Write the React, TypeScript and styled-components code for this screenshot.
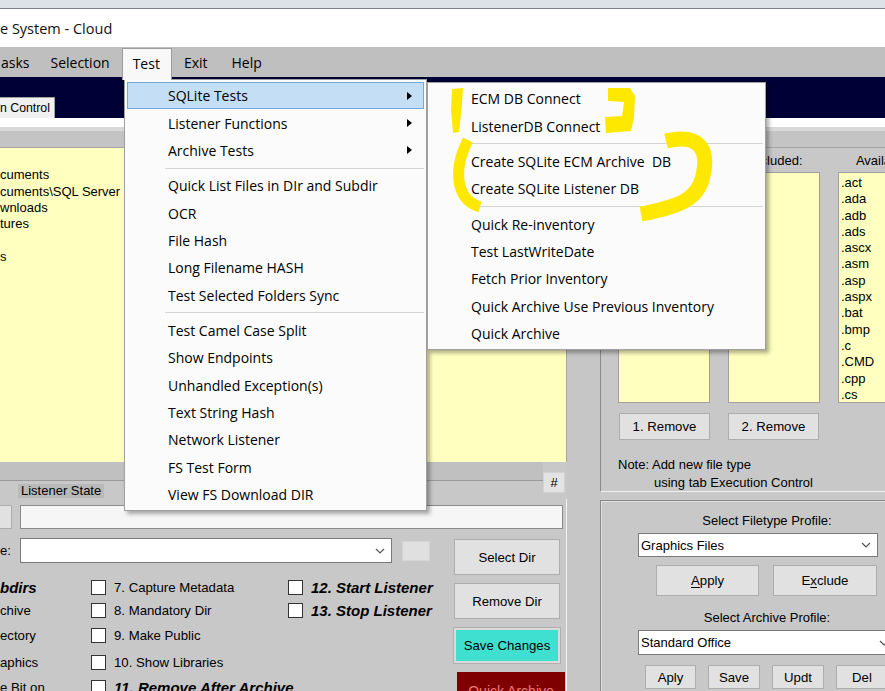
import React from "react";
import styled, { createGlobalStyle, css } from "styled-components";

const UI = `"Open Sans", "Noto Sans", sans-serif`;
const FORM = `"Liberation Sans", Arial, sans-serif`;

const Global = createGlobalStyle`
  html, body { margin: 0; padding: 0; }
  body {
    width: 885px; height: 691px; overflow: hidden;
    background: #c8c8c8;
    font-family: ${FORM};
    color: #000;
  }
  #root { width: 885px; height: 691px; }
  * { box-sizing: border-box; }
`;

const Window = styled.div`
  position: relative;
  width: 885px;
  height: 691px;
  overflow: hidden;
  display: flex;
  flex-direction: column;
  & > * { flex-shrink: 0; }
`;

const TopStrip = styled.div`
  height: 9px;
  background: #dde1e8;
  border-bottom: 1px solid #7c8088;
`;

const TitleBar = styled.div`
  height: 38px;
  background: #fff;
  display: flex;
  align-items: center;
  font-family: ${UI};
  font-size: 14.5px;
  color: #111;
`;

const MenuBar = styled.div`
  height: 30px;
  background: #bfbfbf;
  display: flex;
  align-items: stretch;
  position: relative;
  z-index: 5;
`;

const MenuItem = styled.div<{ $active?: boolean; $first?: boolean }>`
  display: flex;
  align-items: center;
  padding: 0 11px;
  font-family: ${UI};
  font-size: 14px;
  color: #000;
  border: 1px solid transparent;
  border-bottom: none;
  ${(p) => p.$first && css`padding: 0 8px 0 0;`}
  ${(p) =>
    p.$active &&
    css`
      background: #f8f8f8;
      border-color: #9c9c9c;
      margin-top: 1px;
      margin-bottom: -3px;
      padding-bottom: 3px;
      padding-left: 10px;
      padding-right: 11px;
    `}
`;

const NavBand = styled.div`
  height: 41px;
  background: #000036;
  display: flex;
  align-items: flex-end;
`;

const Tab = styled.div`
  height: 21px;
  background: #f0f0f0;
  border-right: 1px solid #a0a0a0;
  border-top: 1px solid #a0a0a0;
  padding: 0 4px 0 0;
  display: flex;
  align-items: center;
  font-family: ${FORM};
  font-size: 12.3px;
`;

const TabPage = styled.div`
  flex: 1;
  background: #fff;
  padding-top: 9px;
  display: flex;
  flex-direction: column;
  min-height: 0;
`;

const Content = styled.div`
  flex: 1;
  background: #c8c8c8;
  display: flex;
  flex-direction: column;
  & > * { flex-shrink: 0; }
`;

const HeaderStrip = styled.div`
  height: 21px;
  background: linear-gradient(#d9d9d9 0 4px, #c4c4c4 4px);
  border-bottom: 1px solid #a6a6a6;
`;

const Main = styled.div`
  flex: 1;
  display: flex;
`;

const LeftCol = styled.div`
  width: 567px;
  display: flex;
  flex-direction: column;
  & > * { flex-shrink: 0; }
`;

const YellowList = styled.div`
  height: 314px;
  background: #ffffc0;
  border-right: 1px solid #a8a8a8;
  padding-top: 3px;
  font-size: 13px;
  line-height: 16.3px;
  white-space: nowrap;
  overflow: hidden;
`;

const ListLine = styled.div`
  height: 16.3px;
`;

const SplitRow = styled.div`
  height: 37px;
  display: flex;
  align-items: flex-start;
`;

const SplitLeft = styled.div`
  flex: 1;
  display: flex;
  flex-direction: column;
`;

const Band = styled.div`
  height: 19px;
  background: #c0c0c0;
  border-bottom: 1px solid #9a9a9a;
`;

const StateLabel = styled.div`
  align-self: flex-start;
  margin: 3px 0 0 18px;
  padding: 0 3px;
  background: #b9b9b9;
  font-size: 13px;
  line-height: 14px;
`;

const HashButton = styled.div`
  width: 22px;
  height: 21px;
  margin: 10px 2px 0 0;
  background: #e3e3e3;
  border: 1px solid #d2d2d2;
  display: flex;
  align-items: center;
  justify-content: center;
  font-size: 13px;
`;

const BottomArea = styled.div`
  flex: 1;
  border-right: 1px solid #f2f2f2;
  padding-top: 6px;
`;

const TextRow = styled.div`
  display: flex;
  gap: 8px;
  height: 24px;
  padding-right: 3px;
`;

const SmallBtn = styled.div`
  width: 12px;
  background: #e1e1e1;
  border: 1px solid #adadad;
  border-left: none;
`;

const TextBox = styled.div`
  flex: 1;
  background: #f6f6f6;
  border: 1px solid #8a8a8a;
`;

const FormGrid = styled.div`
  display: grid;
  grid-template-columns: 440px 106px;
  column-gap: 14px;
  margin-top: 9px;
`;

const LeftForm = styled.div`
  display: flex;
  flex-direction: column;
`;

const ComboRow = styled.div`
  display: flex;
  align-items: center;
  height: 25px;
`;

const ShortLabel = styled.div`
  width: 20px;
  font-size: 13px;
`;

const Combo = styled.div<{ $w: number; $h?: number }>`
  width: ${(p) => p.$w}px;
  height: ${(p) => p.$h ?? 25}px;
  background: #fff;
  border: 1px solid #7a7a7a;
  display: flex;
  align-items: center;
  padding-left: 2px;
  font-size: 13px;
  position: relative;
`;

const ComboText = styled.span`
  flex: 1;
`;

const Chevron = styled.svg`
  width: 10px;
  height: 6px;
  margin-right: 6px;
`;

const ColorBox = styled.div`
  width: 28px;
  height: 20px;
  margin-left: 10px;
  background: #e0e0e0;
  border: 1px solid #d4d4d4;
`;

const CheckGrid = styled.div`
  margin-top: 12px;
  display: grid;
  grid-template-columns: 91px 197px auto;
  grid-template-rows: 24px 23px 26px 28px 22px;
  white-space: nowrap;
`;

const CheckItem = styled.div<{ $col: number; $row: number }>`
  grid-column: ${(p) => p.$col};
  grid-row: ${(p) => p.$row};
  display: flex;
  align-items: center;
  gap: 8px;
`;

const Box = styled.div`
  width: 15px;
  height: 15px;
  background: #fff;
  border: 1px solid #333;
  flex: none;
`;

const CheckText = styled.span<{ $strong?: boolean }>`
  font-size: 13.2px;
  ${(p) =>
    p.$strong &&
    css`
      font-weight: bold;
      font-style: italic;
      font-size: 15px;
    `}
`;

const ButtonCol = styled.div`
  display: flex;
  flex-direction: column;
  padding-top: 1px;
`;

const Btn = styled.div<{ $w?: number; $h: number; $mt?: number; $ml?: number }>`
  width: ${(p) => (p.$w ? `${p.$w}px` : "auto")};
  height: ${(p) => p.$h}px;
  margin-top: ${(p) => p.$mt ?? 0}px;
  margin-left: ${(p) => p.$ml ?? 0}px;
  background: #e1e1e1;
  border: 1px solid #adadad;
  display: flex;
  align-items: center;
  justify-content: center;
  font-size: 13.2px;
  flex: none;
`;

const SaveBtn = styled(Btn)`
  background: #40e0d0;
  border: 2px solid #dadada;
  box-shadow: 0 0 0 1px #b0b0b0;
`;

const DangerBtn = styled.div`
  height: 40px;
  margin: 9px 0 0 3px;
  width: 108px;
  background: #7f0000;
  color: #ee7a7a;
  display: flex;
  justify-content: center;
  padding-top: 11px;
  font-size: 14px;
  flex: none;
`;

const Gutter = styled.div`
  width: 33px;
  background: #c6c6c6;
`;

const RightCol = styled.div`
  width: 285px;
  overflow: hidden;
  display: flex;
  flex-direction: column;
`;

const RightInner = styled.div`
  width: 333px;
  display: flex;
  flex-direction: column;
  flex: 1;
  & > * { flex-shrink: 0; }
`;

const TopBox = styled.div`
  height: 344px;
  border-left: 1px solid #8a8a8a;
  border-bottom: 1px solid #f0f0f0;
  padding-left: 17px;
  display: flex;
  flex-direction: column;
  & > * { flex-shrink: 0; }
`;

const Tri = styled.div`
  display: grid;
  grid-template-columns: 92px 92px 92px;
  column-gap: 18px;
`;

const ColLabel = styled.div`
  margin-top: 5px;
  text-align: center;
  font-size: 13px;
  line-height: 15px;
`;

const SmallList = styled.div`
  height: 231px;
  margin-top: 4px;
  background: #ffffc0;
  border: 1px solid #a0a0a0;
  padding: 2px 0 0 2px;
  font-size: 13px;
  line-height: 16.3px;
  overflow: hidden;
`;

const RemoveRow = styled.div`
  display: flex;
  gap: 18px;
  margin-top: 10px;
  padding-left: 1px;
`;

const Note = styled.div`
  margin-top: 16px;
  font-size: 13px;
  line-height: 18px;
`;

const NoteIndent = styled.div`
  padding-left: 36px;
`;

const BoxGap = styled.div`
  height: 8px;
`;

const LowerBox = styled.div`
  flex: 1;
  border-top: 1px solid #8a8a8a;
  border-left: 1px solid #8a8a8a;
  box-shadow: inset 1px 1px 0 #dedede;
  padding-top: 12px;
  display: flex;
  flex-direction: column;
  & > * { flex-shrink: 0; }
`;

const CenterLabel = styled.div<{ $mt?: number }>`
  text-align: center;
  font-size: 13px;
  line-height: 16px;
  margin-top: ${(p) => p.$mt ?? 0}px;
`;

const Row = styled.div<{ $ml: number; $gap: number; $mt: number }>`
  display: flex;
  gap: ${(p) => p.$gap}px;
  margin-left: ${(p) => p.$ml}px;
  margin-top: ${(p) => p.$mt}px;
`;

const U = styled.span`
  text-decoration: underline;
  text-underline-offset: 2px;
`;

/* ---------- menus ---------- */

const Dropdown = styled.div<{ $left: number; $top: number; $w: number }>`
  position: absolute;
  left: ${(p) => p.$left}px;
  top: ${(p) => p.$top}px;
  width: ${(p) => p.$w}px;
  background: #fbfbfb;
  border: 1px solid #a0a0a0;
  padding: 2px;
  box-shadow: 3px 3px 4px rgba(0, 0, 0, 0.32);
  z-index: 4;
`;

const MenuRow = styled.div<{ $hl?: boolean }>`
  position: relative;
  height: 27.35px;
  display: flex;
  align-items: center;
  padding-left: 40px;
  font-family: ${UI};
  font-size: 14px;
  color: #000;
  white-space: pre;
  border: 1px solid transparent;
  ${(p) =>
    p.$hl &&
    css`
      background: #c3def5;
      border-color: #72a9dd;
    `}
`;

const Arrow = styled.svg`
  position: absolute;
  right: 11px;
  top: 50%;
  margin-top: -4px;
  width: 5px;
  height: 8px;
`;

const Sep = styled.div`
  height: 8px;
  display: flex;
  align-items: center;
  padding-left: 38px;
  &::after {
    content: "";
    flex: 1;
    height: 1px;
    background: #d4d4d4;
  }
`;

const Overlay = styled.svg`
  position: absolute;
  left: 0;
  top: 0;
  width: 885px;
  height: 691px;
  pointer-events: none;
  z-index: 10;
`;

type Entry = string | { label: string; sub?: boolean; hl?: boolean };

const mainMenu: Entry[] = [
  { label: "SQLite Tests", sub: true, hl: true },
  { label: "Listener Functions", sub: true },
  { label: "Archive Tests", sub: true },
  "-",
  "Quick List Files in DIr and Subdir",
  "OCR",
  "File Hash",
  "Long Filename HASH",
  "Test Selected Folders Sync",
  "-",
  "Test Camel Case Split",
  "Show Endpoints",
  "Unhandled Exception(s)",
  "Text String Hash",
  "Network Listener",
  "FS Test Form",
  "View FS Download DIR",
];

const subMenu: Entry[] = [
  "ECM DB Connect",
  "ListenerDB Connect",
  "-",
  "Create SQLite ECM Archive  DB",
  "Create SQLite Listener DB",
  "-",
  "Quick Re-inventory",
  "Test LastWriteDate",
  "Fetch Prior Inventory",
  "Quick Archive Use Previous Inventory",
  "Quick Archive",
];

const renderEntries = (entries: Entry[]) =>
  entries.map((e, i) => {
    if (e === "-") return <Sep key={i} />;
    const item = typeof e === "string" ? { label: e } : e;
    return (
      <MenuRow key={i} $hl={item.hl}>
        {item.label}
        {item.sub && (
          <Arrow viewBox="0 0 5 8">
            <polygon points="0,0 5,4 0,8" fill="#000" />
          </Arrow>
        )}
      </MenuRow>
    );
  });

const ChevronIcon = () => (
  <Chevron viewBox="0 0 10 6">
    <polyline points="1,1 5,5 9,1" fill="none" stroke="#555" strokeWidth="1.2" />
  </Chevron>
);

const leftList = ["", "cuments", "cuments\\SQL Server Management Studio", "wnloads", "tures", "", "s"];
const extensions = [".act", ".ada", ".adb", ".ads", ".ascx", ".asm", ".asp", ".aspx", ".bat", ".bmp", ".c", ".CMD", ".cpp", ".cs"];

const checks: { col: number; row: number; text: string; strong?: boolean; box?: boolean }[] = [
  { col: 1, row: 1, text: "bdirs", strong: true },
  { col: 1, row: 2, text: "chive" },
  { col: 1, row: 3, text: "ectory" },
  { col: 1, row: 4, text: "aphics" },
  { col: 1, row: 5, text: "e Bit on" },
  { col: 2, row: 1, text: "7. Capture Metadata", box: true },
  { col: 2, row: 2, text: "8. Mandatory Dir", box: true },
  { col: 2, row: 3, text: "9. Make Public", box: true },
  { col: 2, row: 4, text: "10. Show Libraries", box: true },
  { col: 2, row: 5, text: "11. Remove After Archive", box: true, strong: true },
  { col: 3, row: 1, text: "12. Start Listener", box: true, strong: true },
  { col: 3, row: 2, text: "13. Stop Listener", box: true, strong: true },
];

export default function App() {
  return (
    <>
      <Global />
      <Window>
        <TopStrip />
        <TitleBar>e System - Cloud</TitleBar>
        <MenuBar>
          <MenuItem $first>asks</MenuItem>
          <MenuItem>Selection</MenuItem>
          <MenuItem $active>Test</MenuItem>
          <MenuItem>Exit</MenuItem>
          <MenuItem>Help</MenuItem>
        </MenuBar>
        <NavBand>
          <Tab>n Control</Tab>
        </NavBand>
        <TabPage>
          <Content>
            <HeaderStrip />
            <Main>
              <LeftCol>
                <YellowList>
                  {leftList.map((t, i) => (
                    <ListLine key={i}>{t}</ListLine>
                  ))}
                </YellowList>
                <SplitRow>
                  <SplitLeft>
                    <Band />
                    <StateLabel>Listener State</StateLabel>
                  </SplitLeft>
                  <HashButton>#</HashButton>
                </SplitRow>
                <BottomArea>
                  <TextRow>
                    <SmallBtn />
                    <TextBox />
                  </TextRow>
                  <FormGrid>
                    <LeftForm>
                      <ComboRow>
                        <ShortLabel>e:</ShortLabel>
                        <Combo $w={372}>
                          <ComboText />
                          <ChevronIcon />
                        </Combo>
                        <ColorBox />
                      </ComboRow>
                      <CheckGrid>
                        {checks.map((c, i) => (
                          <CheckItem key={i} $col={c.col} $row={c.row}>
                            {c.box && <Box />}
                            <CheckText $strong={c.strong}>{c.text}</CheckText>
                          </CheckItem>
                        ))}
                      </CheckGrid>
                    </LeftForm>
                    <ButtonCol>
                      <Btn $h={36}>Select Dir</Btn>
                      <Btn $h={36} $mt={8}>Remove Dir</Btn>
                      <SaveBtn $h={35} $mt={9}>Save Changes</SaveBtn>
                      <DangerBtn>Quick Archive</DangerBtn>
                    </ButtonCol>
                  </FormGrid>
                </BottomArea>
              </LeftCol>
              <Gutter />
              <RightCol>
                <RightInner>
                  <TopBox>
                    <Tri>
                      <ColLabel>Included:</ColLabel>
                      <ColLabel>Excluded:</ColLabel>
                      <ColLabel>Available:</ColLabel>
                    </Tri>
                    <Tri>
                      <SmallList />
                      <SmallList />
                      <SmallList>
                        {extensions.map((x) => (
                          <div key={x}>{x}</div>
                        ))}
                      </SmallList>
                    </Tri>
                    <RemoveRow>
                      <Btn $w={91} $h={27}>1. Remove</Btn>
                      <Btn $w={91} $h={27}>2. Remove</Btn>
                    </RemoveRow>
                    <Note>
                      <div>Note: Add new file type</div>
                      <NoteIndent>using tab Execution Control</NoteIndent>
                    </Note>
                  </TopBox>
                  <BoxGap />
                  <LowerBox>
                    <CenterLabel>Select Filetype Profile:</CenterLabel>
                    <Row $ml={37} $gap={0} $mt={4}>
                      <Combo $w={240} $h={24}>
                        <ComboText>Graphics Files</ComboText>
                        <ChevronIcon />
                      </Combo>
                    </Row>
                    <Row $ml={55} $gap={14} $mt={8}>
                      <Btn $w={103} $h={31}>
                        <U>A</U>pply
                      </Btn>
                      <Btn $w={104} $h={31}>
                        E<U>x</U>clude
                      </Btn>
                    </Row>
                    <CenterLabel $mt={14}>Select Archive Profile:</CenterLabel>
                    <Row $ml={37} $gap={0} $mt={4}>
                      <Combo $w={258} $h={25}>
                        <ComboText>Standard Office</ComboText>
                        <ChevronIcon />
                      </Combo>
                    </Row>
                    <Row $ml={44} $gap={12} $mt={10}>
                      <Btn $w={51} $h={24}>Aply</Btn>
                      <Btn $w={52} $h={24}>Save</Btn>
                      <Btn $w={52} $h={24}>Updt</Btn>
                      <Btn $w={52} $h={24}>Del</Btn>
                    </Row>
                  </LowerBox>
                </RightInner>
              </RightCol>
            </Main>
          </Content>
        </TabPage>

        <Dropdown $left={124} $top={79} $w={303}>
          {renderEntries(mainMenu)}
          <Dropdown $left={302} $top={2} $w={339}>
            {renderEntries(subMenu)}
          </Dropdown>
        </Dropdown>

        <Overlay viewBox="0 0 885 691">
          <g fill="#ffe800">
            <polygon points="452,89 463,88 462,104 459,132 453,133 451,110" />
            <polygon points="608,88 630,88 635,96 634,118 631,131 606,133 605,117 622,116 624,102 608,101" />
          </g>
          <g fill="none" stroke="#ffe800" strokeLinecap="butt">
            <path d="M468 140 Q455 165 460 186 Q464 202 480 207" strokeWidth="11" />
            <path d="M666 141 C700 133 709 150 703 176 C698 200 678 207 641 214" strokeWidth="15" />
          </g>
        </Overlay>
      </Window>
    </>
  );
}
